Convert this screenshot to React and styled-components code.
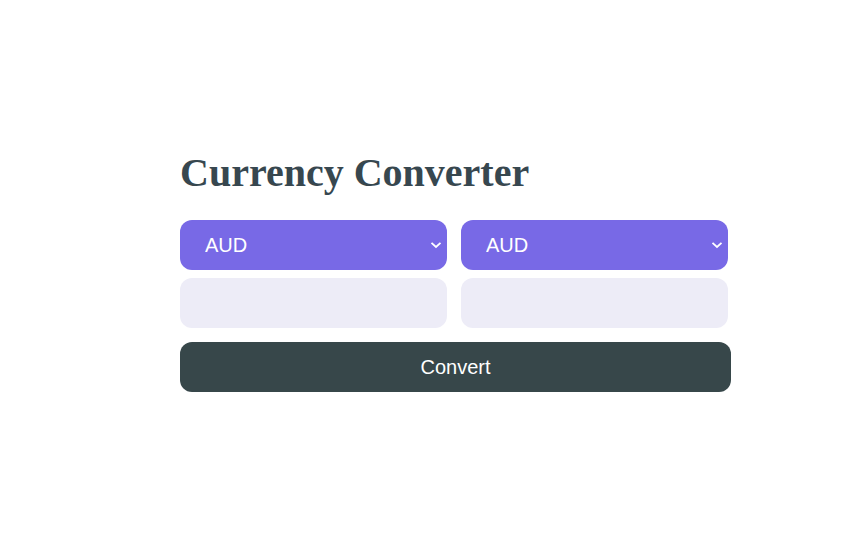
import React, { useState } from "react";
import styled, { createGlobalStyle } from "styled-components";

const Global = createGlobalStyle`
  html, body { margin: 0; padding: 0; background: #ffffff; }
  body { font-family: "Liberation Sans", Arial, sans-serif; }
`;

const Page = styled.div`
  width: 867px;
  height: 537px;
  box-sizing: border-box;
  padding: 150px 0 0 180px;
`;

const Card = styled.div`
  width: 551px;
  display: flex;
  flex-direction: column;
`;

const Title = styled.h1`
  margin: 0 0 24px 0;
  font-family: "Liberation Serif", "Times New Roman", serif;
  font-weight: 700;
  font-size: 40px;
  line-height: 46px;
  color: #37474f;
`;

const Grid = styled.div`
  display: grid;
  grid-template-columns: 267px 267px;
  column-gap: 14px;
  row-gap: 8px;
`;

const SelectWrap = styled.div`
  position: relative;
  height: 50px;
`;

const Select = styled.select`
  appearance: none;
  -webkit-appearance: none;
  width: 100%;
  height: 50px;
  border: none;
  border-radius: 12px;
  background: #7869e6;
  color: #ffffff;
  font-family: "Liberation Sans", Arial, sans-serif;
  font-size: 20px;
  padding: 0 24px 0 25px;
  outline: none;
  cursor: pointer;
`;

const Chevron = styled.svg`
  position: absolute;
  right: 5px;
  top: 21px;
  width: 12px;
  height: 8px;
  pointer-events: none;
`;

const Input = styled.input`
  height: 50px;
  box-sizing: border-box;
  border: none;
  border-radius: 12px;
  background: #edecf7;
  font-family: "Liberation Sans", Arial, sans-serif;
  font-size: 20px;
  padding: 0 20px;
  outline: none;
`;

const Button = styled.button`
  margin-top: 14px;
  width: 551px;
  height: 50px;
  border: none;
  border-radius: 12px;
  background: #37474a;
  color: #ffffff;
  font-family: "Liberation Sans", Arial, sans-serif;
  font-size: 20px;
  cursor: pointer;
`;

const currencies = ["AUD", "USD", "EUR", "GBP", "JPY"];

function CurrencySelect({ value, onChange }) {
  return (
    <SelectWrap>
      <Select value={value} onChange={(e) => onChange(e.target.value)}>
        {currencies.map((c) => (
          <option key={c}>{c}</option>
        ))}
      </Select>
      <Chevron viewBox="0 0 12 8">
        <path d="M1.5 1.8 L6 6 L10.5 1.8" fill="none" stroke="#ffffff" strokeWidth="1.8" />
      </Chevron>
    </SelectWrap>
  );
}

export default function App() {
  const [from, setFrom] = useState("AUD");
  const [to, setTo] = useState("AUD");
  return (
    <Page>
      <Global />
      <Card>
        <Title>Currency Converter</Title>
        <Grid>
          <CurrencySelect value={from} onChange={setFrom} />
          <CurrencySelect value={to} onChange={setTo} />
          <Input type="text" />
          <Input type="text" />
        </Grid>
        <Button>Convert</Button>
      </Card>
    </Page>
  );
}
